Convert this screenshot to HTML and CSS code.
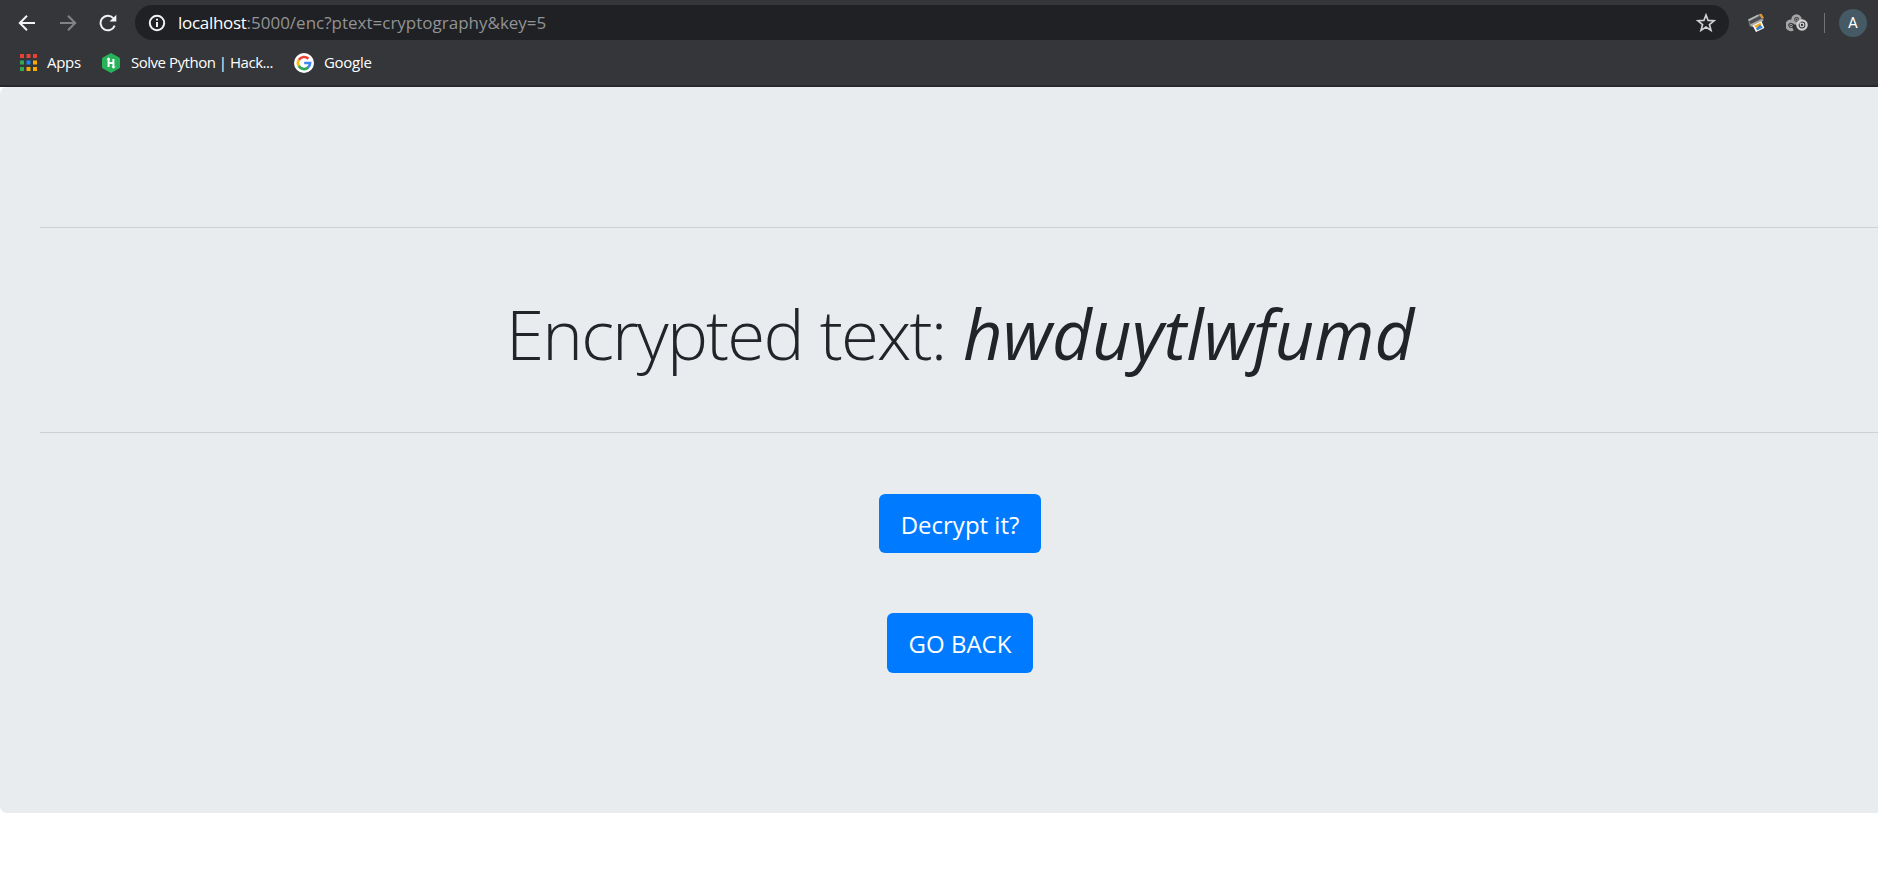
FILE: index.html
```html
<!DOCTYPE html>
<html lang="en">
<head>
<meta charset="utf-8">
<title>Encrypted text</title>
<link rel="stylesheet" href="styles.css">
</head>
<body>
<header class="browser">
  <div class="toolbar">
    <svg class="nav back" viewBox="0 0 18 18"><path d="M17 9H2.2M9 1.8L1.8 9L9 16.2"/></svg>
    <svg class="nav forward" viewBox="0 0 18 18"><path d="M1 9H15.8M9 1.8L16.2 9L9 16.2"/></svg>
    <svg class="nav reload" viewBox="0 0 18 18"><path d="M15.7 11.6A7.3 7.3 0 1 1 14.3 4.1"/><path class="tip" d="M17.3 .8V7.6H10.5Z"/></svg>
    <div class="address">
      <svg class="info" viewBox="0 0 18 18"><circle cx="9" cy="9" r="7.2"/><path d="M9 8V13M9 4.8V6.6"/></svg>
      <span class="url"><span class="host">localhost</span><span class="path">:5000/enc?ptext=cryptography&amp;key=5</span></span>
      <svg class="star" viewBox="0 0 18 18"><path d="M9 1.8L10.9 6.7L16.2 7L12.1 10.4L13.5 15.6L9 12.7L4.5 15.6L5.9 10.4L1.8 7L7.1 6.7Z"/></svg>
    </div>
    <svg class="printer" viewBox="0 0 18 20"><path fill="#77787a" d="M1 7L13 1L17 7L3 14Z"/><path fill="#4b4d50" d="M2 8.5L13 3L14.5 5.5L4 11Z"/><path fill="#b9babc" d="M1 6.5L11 1.5L12 2.8L2 8Z"/><path fill="#e59a2e" d="M12 1L14.5 .8L17 5L14.8 5.5Z"/><path fill="#aaa" d="M3 11.5L15 6L16 8L5 14Z"/><path fill="#fff" d="M5.5 12.5L14.5 8.3L17.4 15L9 19Z"/><path fill="#f6a81f" d="M7 12.7L13.5 9.8L14.5 12.5L9 15Z"/><path fill="#397fd1" d="M9 15.5L13 11.8L16 14.5L10 17.5Z"/></svg>
    <svg class="gears" viewBox="0 0 22 18"><g fill="none" stroke="#a5a5a5"><circle cx="10.5" cy="5.5" r="3.8" stroke-width="2.8"/><circle cx="10.5" cy="5.5" r="1.2"/><path d="M7 15A4.2 4.2 0 1 1 8 8.5" stroke-width="3.2"/><circle cx="5" cy="11.5" r="1.3"/></g><g fill="none" stroke="#d2d2d2"><circle cx="16" cy="11" r="4.6" stroke-width="2.4"/><circle cx="16" cy="11" r="1.8" stroke-width="1.3"/></g></svg>
    <span class="divider"></span>
    <span class="avatar">A</span>
  </div>
  <nav class="bookmarks">
    <svg class="apps" viewBox="0 0 17 17"><path fill="#e94235" d="M0 0h4v4H0zM6.5 0h4v4h-4zM13 0h4v4h-4z"/><path fill="#34a853" d="M0 6.5h4v4H0zM0 13h4v4H0z"/><path fill="#1a83f5" d="M6.5 6.5h4v4h-4z"/><path fill="#f9ab00" d="M13 6.5h4v4h-4zM6.5 13h4v4h-4zM13 13h4v4h-4z"/></svg>
    <span class="label apps-label">Apps</span>
    <svg class="hacker" viewBox="0 0 18 20"><path fill="#26b35a" d="M9 0L16.7 4.2Q18 5 18 6.3V13.7Q18 15 16.7 15.8L9 20L1.3 15.8Q0 15 0 13.7V6.3Q0 5 1.3 4.2Z"/><path fill="none" stroke="#fff" stroke-width="2" d="M6.6 5V14M11.4 6V15M6.6 10H11.4"/><path fill="#fff" d="M4.4 6.8L6.6 4.3L8.4 6.8ZM9.6 13.4L11.4 15.8L13.6 13.4Z"/></svg>
    <span class="label hack-label">Solve Python | Hack...</span>
    <svg class="google" viewBox="0 0 20 20"><circle cx="10" cy="10" r="10" fill="#fff"/><g fill="none" stroke-width="2.7"><path stroke="#ea4335" d="M4.8 7A6.1 6.1 0 0 1 14.4 5.8"/><path stroke="#fbbc05" d="M4.8 6.9A6.1 6.1 0 0 0 4.8 13.1"/><path stroke="#34a853" d="M4.8 13A6.1 6.1 0 0 0 14 14.6"/><path stroke="#4285f4" d="M10.2 10H16.1A6.1 6.1 0 0 1 13.7 14.8"/></g></svg>
    <span class="label google-label">Google</span>
  </nav>
</header>
<main class="jumbotron">
  <div class="content">
    <hr class="rule">
    <h1 class="result"><span class="caption">Encrypted text:</span><em class="cipher">hwduytlwfumd</em></h1>
    <hr class="rule">
    <a class="button decrypt">Decrypt it?</a>
    <a class="button return">GO BACK</a>
  </div>
</main>
</body>
</html>
```
FILE: styles.css
```css
* { box-sizing: border-box; }
body { margin: 0; overflow: hidden; background: #fff; font-family: "Open Sans", "Noto Sans", sans-serif; }
svg { display: block; flex: none; }
.browser { height: 87px; background: #35363a; border-bottom: 2px solid #27282a; }
.toolbar { display: flex; align-items: center; height: 45px; padding-left: 18px; }
.nav { width: 18px; height: 18px; fill: none; stroke: #f1f3f4; stroke-width: 2; }
.forward { margin-left: 23px; stroke: #828386; }
.reload { margin-left: 22px; }
.tip { fill: #f1f3f4; stroke: none; }
.address { display: flex; flex: none; align-items: center; width: 1594px; height: 35px; margin-left: 18px; padding-left: 13px; border-radius: 18px; background: #202124; }
.info { width: 18px; height: 18px; fill: none; stroke: #f1f3f4; stroke-width: 2; }
.url { flex: 1; margin-left: 12px; font-size: 17px; white-space: nowrap; }
.host { color: #fff; letter-spacing: -.3px; }
.path { color: #919396; letter-spacing: 0; }
.star { width: 20px; height: 20px; margin-right: 13px; fill: none; stroke: #d0d1d3; stroke-width: 1.5; }
.printer { width: 18px; height: 20px; margin-left: 18px; }
.gears { width: 22px; height: 18px; margin-left: 21px; }
.divider { width: 1px; height: 20px; margin-left: 16px; background: #717275; }
.avatar { flex: none; width: 28px; height: 28px; margin-left: 14px; border-radius: 50%; background: #455a64; color: #fff; font: 15px/28px Roboto, sans-serif; text-align: center; }
.bookmarks { display: flex; align-items: center; height: 35px; padding-left: 20px; }
.apps { width: 17px; height: 17px; }
.label { padding-bottom: 1px; color: #fff; font-size: 15px; white-space: nowrap; }
.apps-label { width: 55px; margin-left: 10px; letter-spacing: -.3px; }
.hacker { width: 18px; height: 20px; }
.hack-label { width: 163px; margin-left: 11px; letter-spacing: -.48px; }
.google { width: 20px; height: 20px; }
.google-label { margin-left: 10px; letter-spacing: -.3px; }
.jumbotron { height: 726px; padding: 140px 0 0 40px; border-radius: 7px 0 0 7px; background: #e9ecef; }
.content { display: flex; flex-direction: column; align-items: center; width: 1840px; }
.rule { width: 100%; height: 1px; margin: 0; border: 0; background: #ced1d4; }
.result { display: flex; height: 204px; margin: 0; padding-top: 57px; color: #212529; font-size: 69px; line-height: 96px; font-weight: 300; white-space: nowrap; }
.caption { width: 455px; padding-left: 1px; letter-spacing: -1.85px; word-spacing: 1px; }
.cipher { width: 455px; padding-left: 3px; font-weight: 400; }
.button { display: flex; align-items: center; justify-content: center; height: 59px; border-radius: 6px; background: #007bff; color: #fff; font-size: 24px; white-space: nowrap; }
.decrypt { width: 162px; margin-top: 61px; padding-top: 1px; }
.return { width: 146px; height: 60px; margin-top: 60px; }
```
